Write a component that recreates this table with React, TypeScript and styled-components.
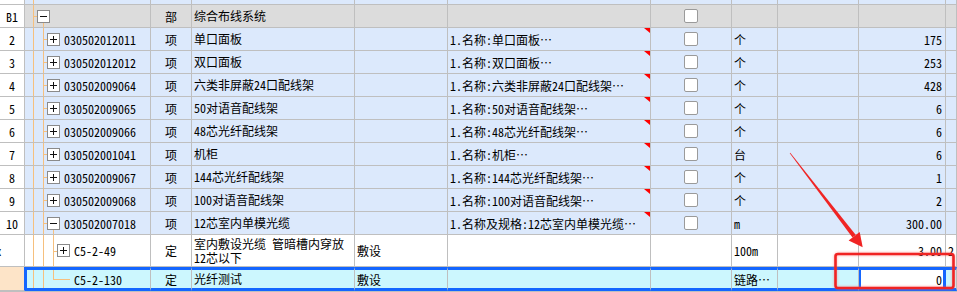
import React from 'react';
import styled, { createGlobalStyle, css } from 'styled-components';

const GlobalStyle = createGlobalStyle`
  html, body { margin: 0; padding: 0; background: #ffffff; }
  body { font-family: "Noto Sans CJK SC", "Noto Sans", sans-serif; font-size: 12px; color: #000; }
`;

const COLS = '25px 126px 41px 163px 93px 203px 81px 46px 81px 87px 1fr';
const GRID = '#bfbfbf';
const BLUE = '#1466ff';
const TREE = '#f6c07e';

type Tone = 'data' | 'header' | 'plain' | 'selected';
const TONE_BG: Record<Tone, string> = {
  data: '#dce9fc',
  header: '#dcdcdc',
  plain: '#ffffff',
  selected: '#ccf7fe',
};

const Sheet = styled.div`
  position: relative;
  width: 957px;
  height: 292px;
  overflow: hidden;
  font-family: "Noto Sans CJK SC", "Noto Sans", sans-serif;
  font-size: 12px;
  font-feature-settings: "hwid" 1;
  color: #000;
`;

const Row = styled.div<{ $h: number; $tone: Tone }>`
  display: grid;
  grid-template-columns: ${COLS};
  height: ${(p) => p.$h}px;
  background: ${(p) => TONE_BG[p.$tone]};
`;

const Cell = styled.div<{ $sel?: boolean }>`
  position: relative;
  box-sizing: border-box;
  display: flex;
  align-items: center;
  min-width: 0;
  padding: 0 0 0 2px;
  border-right: 1px solid ${GRID};
  border-bottom: 1px solid ${GRID};
  overflow: hidden;
  white-space: nowrap;
  line-height: 13px;
  ${(p) =>
    p.$sel &&
    css`
      border-top: 3px solid ${BLUE};
      border-bottom: 3px solid ${BLUE};
    `}
`;

const NumCell = styled(Cell)<{ $peach?: boolean }>`
  justify-content: center;
  padding: 0;
  background: ${(p) => (p.$peach ? '#fde4c8' : '#ffffff')};
  ${(p) => p.$peach && css`border-right-color: ${BLUE}; border-top: 0; border-bottom: 1px solid ${GRID};`}
`;

const ClippedMark = styled.span`
  margin-left: -27px;
`;

const TreeCell = styled(Cell)<{ $pad: number }>`
  padding-left: ${(p) => p.$pad}px;
  ${(p) => p.$sel && css`border-left: 2px solid ${BLUE};`}
`;

const Guide = styled.span<{ $x: number; $top: string; $bottom: string }>`
  position: absolute;
  left: ${(p) => p.$x}px;
  top: ${(p) => p.$top};
  bottom: ${(p) => p.$bottom};
  width: 1px;
  background: ${TREE};
`;

const Tick = styled.span<{ $x: number; $w: number }>`
  position: absolute;
  left: ${(p) => p.$x}px;
  width: ${(p) => p.$w}px;
  top: 50%;
  height: 1px;
  background: ${TREE};
`;

const Toggle = styled.span<{ $open: boolean }>`
  position: relative;
  flex: none;
  box-sizing: border-box;
  width: 13px;
  height: 13px;
  border: 1px solid #8a8a8a;
  background: #ffffff;
  &::before {
    content: '';
    position: absolute;
    left: 2px;
    top: 5px;
    width: 7px;
    height: 1px;
    background: #111;
  }
  &::after {
    content: '';
    display: ${(p) => (p.$open ? 'none' : 'block')};
    position: absolute;
    left: 5px;
    top: 2px;
    width: 1px;
    height: 7px;
    background: #111;
  }
`;

const LeafSpace = styled.span`
  flex: none;
  width: 13px;
`;

const Code = styled.span`
  margin-left: 4px;
  letter-spacing: 0;
`;

const KindCell = styled(Cell)`
  justify-content: center;
  padding: 0;
`;

const NameCell = styled(Cell)`
  flex-direction: column;
  align-items: flex-start;
  justify-content: center;
`;

const NameLine = styled.span`
  display: block;
  height: 14px;
  line-height: 14px;
`;

const FeatCell = styled(Cell)<{ $flag?: boolean }>`
  ${(p) =>
    p.$flag &&
    css`
      &::after {
        content: '';
        position: absolute;
        top: 0;
        right: 0;
        width: 0;
        height: 0;
        border-top: 5px solid #ff0000;
        border-left: 6px solid transparent;
      }
    `}
`;

const CheckCell = styled(Cell)`
  justify-content: center;
  padding: 0;
`;

const Check = styled.span`
  box-sizing: border-box;
  width: 14px;
  height: 14px;
  border: 1px solid #9a9a9a;
  border-radius: 2px;
  background: #ffffff;
`;

const QtyCell = styled(Cell)`
  justify-content: flex-end;
  padding: 0 3px 0 0;
`;

const EditCell = styled(QtyCell)`
  background: #ffffff;
  border-left: 2px solid ${BLUE};
  border-right: 3px solid ${BLUE};
  padding-right: 1px;
`;

const Overlay = styled.svg`
  position: absolute;
  left: 0;
  top: 0;
  pointer-events: none;
`;

type GuideSpec =
  | { t: 'v'; x: number; top?: string; bottom?: string }
  | { t: 'h'; x: number; w: number };

type Spec = {
  h: number;
  tone: Tone;
  no?: React.ReactNode;
  level: number;
  box?: 'plus' | 'minus' | 'leaf' | 'none';
  code?: string;
  guides: GuideSpec[];
  kind?: string;
  name?: string[];
  work?: string;
  feat?: string;
  flag?: boolean;
  check?: boolean;
  unit?: string;
  qty?: string;
  extra?: string;
};

const full = (x: number): GuideSpec => ({ t: 'v', x, top: '0', bottom: '-1px' });

const items = [
  { no: '2', code: '030502012011', name: '单口面板', feat: '1.名称:单口面板…', unit: '个', qty: '175' },
  { no: '3', code: '030502012012', name: '双口面板', feat: '1.名称:双口面板…', unit: '个', qty: '253' },
  { no: '4', code: '030502009064', name: '六类非屏蔽24口配线架', feat: '1.名称:六类非屏蔽24口配线架…', unit: '个', qty: '428' },
  { no: '5', code: '030502009065', name: '50对语音配线架', feat: '1.名称:50对语音配线架…', unit: '个', qty: '6' },
  { no: '6', code: '030502009066', name: '48芯光纤配线架', feat: '1.名称:48芯光纤配线架…', unit: '个', qty: '6' },
  { no: '7', code: '030502001041', name: '机柜', feat: '1.名称:机柜…', unit: '台', qty: '6' },
  { no: '8', code: '030502009067', name: '144芯光纤配线架', feat: '1.名称:144芯光纤配线架…', unit: '个', qty: '1' },
  { no: '9', code: '030502009068', name: '100对语音配线架', feat: '1.名称:100对语音配线架…', unit: '个', qty: '2' },
];

const specs: Spec[] = [
  { h: 5, tone: 'data', level: 0, box: 'none', guides: [full(8)] },
  {
    h: 23,
    tone: 'header',
    no: 'B1',
    level: 0,
    box: 'minus',
    guides: [full(8), { t: 'h', x: 8, w: 4 }, { t: 'v', x: 18, top: '17px', bottom: '-1px' }],
    kind: '部',
    name: ['综合布线系统'],
    check: true,
  },
  ...items.map<Spec>((it) => ({
    h: 23,
    tone: 'data',
    no: it.no,
    level: 1,
    box: 'plus',
    code: it.code,
    guides: [full(8), full(18), { t: 'h', x: 18, w: 4 }],
    kind: '项',
    name: [it.name],
    feat: it.feat,
    flag: true,
    check: true,
    unit: it.unit,
    qty: it.qty,
  })),
  {
    h: 23,
    tone: 'data',
    no: '10',
    level: 1,
    box: 'minus',
    code: '030502007018',
    guides: [full(8), full(18), { t: 'h', x: 18, w: 4 }, { t: 'v', x: 28, top: '17px', bottom: '-1px' }],
    kind: '项',
    name: ['12芯室内单模光缆'],
    feat: '1.名称及规格:12芯室内单模光缆…',
    flag: true,
    check: true,
    unit: 'm',
    qty: '300.00',
  },
  {
    h: 32,
    tone: 'plain',
    no: <ClippedMark>x</ClippedMark>,
    level: 2,
    box: 'plus',
    code: 'C5-2-49',
    guides: [full(8), full(18), full(28), { t: 'h', x: 28, w: 4 }],
    kind: '定',
    name: ['室内敷设光缆 管暗槽内穿放', '12芯以下'],
    work: '敷设',
    unit: '100m',
    qty: '3.00',
    extra: '2',
  },
  {
    h: 24,
    tone: 'selected',
    no: '',
    level: 2,
    box: 'leaf',
    code: 'C5-2-130',
    guides: [
      { t: 'v', x: 8, top: '0', bottom: '0' },
      { t: 'v', x: 18, top: '0', bottom: '0' },
      { t: 'v', x: 28, top: '0', bottom: '50%' },
      { t: 'h', x: 28, w: 17 },
    ],
    kind: '定',
    name: ['光纤测试'],
    work: '敷设',
    unit: '链路…',
    qty: '0',
  },
  { h: 1, tone: 'data', level: 0, box: 'none', guides: [] },
];

function SheetRow({ s }: { s: Spec }) {
  const sel = s.tone === 'selected';
  const off = sel ? 2 : 0;
  const pad = 12 + 10 * s.level - off;
  return (
    <Row $h={s.h} $tone={s.tone}>
      <NumCell $peach={sel}>{s.no}</NumCell>
      <TreeCell $sel={sel} $pad={pad}>
        {s.guides.map((g, i) =>
          g.t === 'v' ? (
            <Guide key={i} $x={g.x - off} $top={g.top ?? '0'} $bottom={g.bottom ?? '-1px'} />
          ) : (
            <Tick key={i} $x={g.x - off} $w={g.w} />
          )
        )}
        {s.box === 'plus' && <Toggle $open={false} />}
        {s.box === 'minus' && <Toggle $open={true} />}
        {s.box === 'leaf' && <LeafSpace />}
        {s.code && <Code>{s.code}</Code>}
      </TreeCell>
      <KindCell $sel={sel}>{s.kind}</KindCell>
      <NameCell $sel={sel}>
        {s.name?.map((line, i) => (
          <NameLine key={i}>{line}</NameLine>
        ))}
      </NameCell>
      <Cell $sel={sel}>{s.work}</Cell>
      <FeatCell $sel={sel} $flag={s.flag}>
        {s.feat}
      </FeatCell>
      <CheckCell $sel={sel}>{s.check && <Check />}</CheckCell>
      <Cell $sel={sel}>{s.unit}</Cell>
      <Cell $sel={sel} />
      {sel ? <EditCell $sel>{s.qty}</EditCell> : <QtyCell>{s.qty}</QtyCell>}
      <Cell $sel={sel}>{s.extra}</Cell>
    </Row>
  );
}

function Annotation() {
  const S = [790, 153];
  const T = [862.7, 247.3];
  const dx = T[0] - S[0];
  const dy = T[1] - S[1];
  const len = Math.hypot(dx, dy);
  const u = [dx / len, dy / len];
  const p = [-u[1], u[0]];
  const B = [T[0] - 14 * u[0], T[1] - 14 * u[1]];
  const pt = (c: number[], k: number) => `${(c[0] + k * p[0]).toFixed(2)},${(c[1] + k * p[1]).toFixed(2)}`;
  const shaft = [pt(S, 0.3), pt(B, 2.1), pt(B, -2.1), pt(S, -0.3)].join(' ');
  const head = [pt(B, 7), `${T[0]},${T[1]}`, pt(B, -7)].join(' ');
  return (
    <Overlay width={957} height={292} viewBox="0 0 957 292">
      <defs>
        <filter id="soft" x="-10%" y="-10%" width="120%" height="120%">
          <feGaussianBlur stdDeviation="1.2" />
        </filter>
      </defs>
      <rect x={835.5} y={254} width={118} height={34} rx={3} fill="none" stroke="#ff6a6a" strokeWidth={4} opacity={0.35} filter="url(#soft)" />
      <rect x={835.5} y={254} width={118} height={34} rx={2.5} fill="none" stroke="#f02424" strokeWidth={2.6} />
      <polygon points={shaft} fill="#f02424" />
      <polygon points={head} fill="#f02424" />
    </Overlay>
  );
}

export default function App() {
  return (
    <>
      <GlobalStyle />
      <Sheet>
        {specs.map((s, i) => (
          <SheetRow key={i} s={s} />
        ))}
        <Annotation />
      </Sheet>
    </>
  );
}
